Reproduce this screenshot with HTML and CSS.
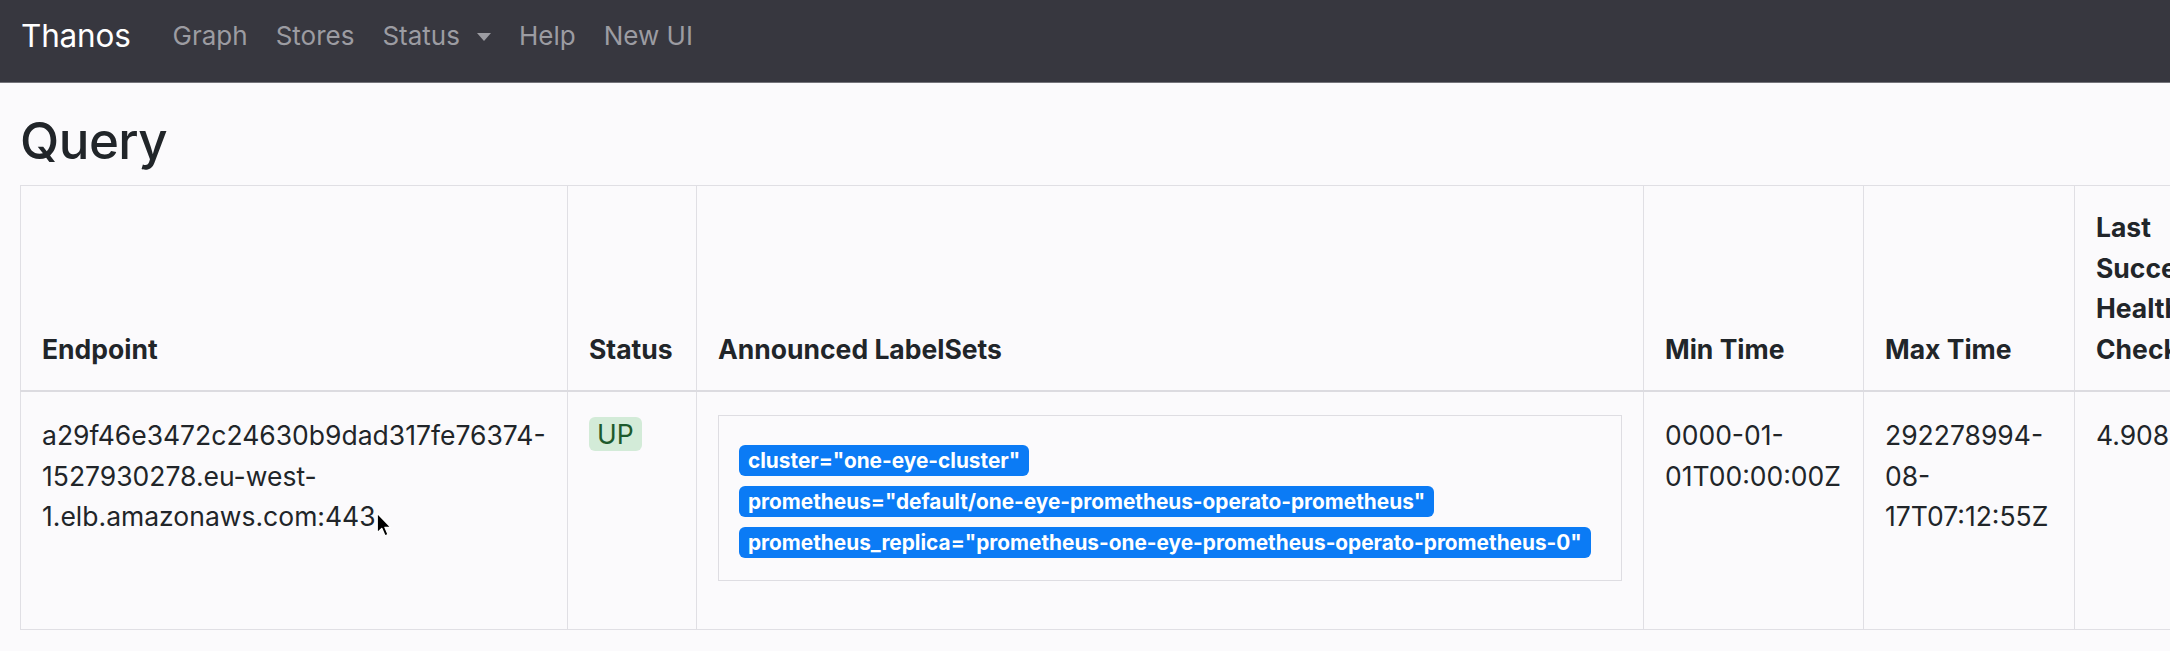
FILE: index.html
```html
<!DOCTYPE html>
<html lang="en">
<head>
<meta charset="utf-8">
<title>Thanos | Stores</title>
<link rel="stylesheet" href="styles.css">
</head>
<body>
<nav class="navbar">
  <a class="brand" href="#">Thanos</a>
  <ul class="nav">
    <li><a class="nav-link" href="#">Graph</a></li>
    <li><a class="nav-link" href="#">Stores</a></li>
    <li><a class="nav-link" href="#">Status <span class="caret"></span></a></li>
    <li><a class="nav-link" href="#">Help</a></li>
    <li><a class="nav-link" href="#">New UI</a></li>
  </ul>
</nav>
<main class="container">
  <h1 class="title">Query</h1>
  <div class="table-wrap">
    <table class="stores">
      <colgroup>
        <col class="c-endpoint">
        <col class="c-status">
        <col class="c-labels">
        <col class="c-min">
        <col class="c-max">
        <col class="c-last">
        <col class="c-msg">
      </colgroup>
      <thead>
        <tr>
          <th>Endpoint</th>
          <th>Status</th>
          <th>Announced LabelSets</th>
          <th>Min Time</th>
          <th>Max Time</th>
          <th>Last Successful Health Check</th>
          <th>Last Message</th>
        </tr>
      </thead>
      <tbody>
        <tr>
          <td>a29f46e3472c24630b9dad317fe76374-1527930278.eu-west-1.elb.amazonaws.com:443</td>
          <td><span class="badge-up">UP</span></td>
          <td>
            <div class="labelsets">
              <span class="label">cluster="one-eye-cluster"</span>
              <span class="label">prometheus="default/one-eye-prometheus-operato-prometheus"</span>
              <span class="label">prometheus_replica="prometheus-one-eye-prometheus-operato-prometheus-0"</span>
            </div>
          </td>
          <td>0000-01-01T00:00:00Z</td>
          <td>292278994-08-17T07:12:55Z</td>
          <td>4.908s ago</td>
          <td></td>
        </tr>
      </tbody>
    </table>
  </div>
</main>
<svg class="cursor" width="15" height="25" viewBox="0 0 12 20" aria-hidden="true">
  <path d="M1 1 L1 16.5 L4.6 13.1 L7.2 19 L9.6 18 L7.1 12.2 L11.8 12.2 Z" fill="#000" stroke="#fff" stroke-width="1" stroke-linejoin="round"/>
</svg>
</body>
</html>
```

FILE: styles.css
```css
html, body {
  margin: 0;
  padding: 0;
}
body {
  font-family: "Inter", "Liberation Sans", sans-serif;
  font-size: 26.5px;
  line-height: 40.5px;
  color: #212529;
  background: #fbfafc;
  overflow: hidden;
}
a {
  text-decoration: none;
}

/* navbar */
.navbar {
  box-sizing: border-box;
  height: 83px;
  background: #37373f;
  border-bottom: 1px solid #74747a;
  display: flex;
  align-items: flex-start;
  padding: 17px 0 0 21px;
}
.brand {
  color: #ffffff;
  font-size: 31.5px;
  line-height: 38px;
  letter-spacing: -0.2px;
  margin-right: 28px;
}
.nav {
  list-style: none;
  margin: 0;
  padding: 0;
  display: flex;
}
.nav-link {
  display: flex;
  align-items: center;
  color: #9c9ca2;
  font-size: 26px;
  line-height: 38px;
  padding: 0 14px;
}
.caret {
  display: inline-block;
  width: 0;
  height: 0;
  margin-left: 17px;
  margin-top: 2px;
  border-left: 7.5px solid transparent;
  border-right: 7.5px solid transparent;
  border-top: 8px solid #9c9ca2;
}

/* page */
.container {
  padding: 27px 0 0 20px;
}
.title {
  font-size: 51px;
  font-weight: 500;
  line-height: 62px;
  margin: 0 0 13px 0;
  letter-spacing: -0.5px;
}
.table-wrap {
  overflow: hidden;
}
.stores {
  border-collapse: collapse;
  table-layout: fixed;
  width: 2900px;
  border: 1px solid #e0dfe4;
}
.c-endpoint { width: 547px; }
.c-status { width: 129px; }
.c-labels { width: 947px; }
.c-min { width: 220px; }
.c-max { width: 211px; }
.c-last { width: 200px; }
.c-msg { width: 646px; }

.stores th,
.stores td {
  border: 1px solid #e0dfe4;
  padding: 21px;
  text-align: left;
}
.stores th {
  font-weight: 700;
  vertical-align: bottom;
  border-bottom: 2px solid #dcdbe0;
}
.stores td {
  vertical-align: top;
  padding-top: 23px;
}

.badge-up {
  display: inline-block;
  vertical-align: top;
  margin-top: 2px;
  padding: 2px 8px;
  line-height: 30px;
  border-radius: 6px;
  background: #d3ebd8;
  color: #1d5a2c;
}

.labelsets {
  border: 1px solid #dedde2;
  padding: 29px 20px 22px 20px;
  margin-bottom: 27px;
  display: flex;
  flex-direction: column;
  align-items: flex-start;
  gap: 10px;
}
.label {
  display: inline-block;
  background: #0b7bf5;
  color: #ffffff;
  font-weight: 700;
  font-size: 20.8px;
  line-height: 19px;
  padding: 6px 9px;
  border-radius: 6px;
  white-space: nowrap;
}

.cursor {
  position: absolute;
  left: 376px;
  top: 512px;
}
```
